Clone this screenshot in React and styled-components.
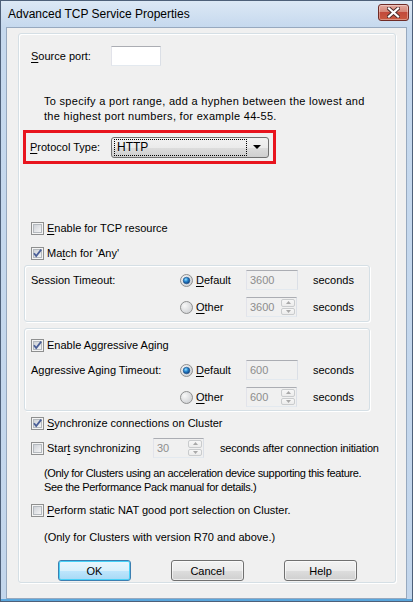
import React from 'react';
import styled, { createGlobalStyle } from 'styled-components';

const GlobalStyle = createGlobalStyle`
  html, body {
    margin: 0;
    padding: 0;
    background: #ffffff;
  }
  body {
    font-family: "Liberation Sans", Arial, sans-serif;
    font-size: 11px;
    color: #000;
  }
`;

const Window = styled.div`
  width: 413px;
  height: 602px;
  box-sizing: border-box;
  border: 1px solid #4e6079;
  background: linear-gradient(#dce8f5, #c6d9ee 26px, #c3d6ec);
  display: flex;
  flex-direction: column;
  padding: 0 5px 2px 5px;
  box-shadow: inset 0 -2px 0 #5aa6dc;
`;

const TitleBar = styled.div`
  height: 26px;
  display: flex;
  justify-content: space-between;
  align-items: center;
  padding-left: 2px;
`;

const Title = styled.span`
  font-size: 12px;
  color: #000;
  padding-bottom: 1px;
`;

const CloseButton = styled.div`
  align-self: flex-start;
  margin-top: 3px;
  margin-right: -2px;
  width: 31px;
  height: 17px;
  box-sizing: border-box;
  border: 1px solid #6f2b26;
  border-radius: 3px;
  background: linear-gradient(#e3a89f, #d58677 45%, #c24a3b 50%, #c9593f);
  box-shadow: inset 0 0 0 1px rgba(255, 255, 255, 0.35);
  display: flex;
  align-items: center;
  justify-content: center;
`;

const Client = styled.div`
  flex: 1;
  background: #f0f0f0;
  border: 1px solid #97a9bf;
  display: flex;
  flex-direction: column;
`;

const Group = styled.div`
  flex: 1;
  margin: 5px 10px 15px 11px;
  border: 1px solid #d5dfe5;
  border-radius: 3px;
  box-shadow: inset 1px 1px 0 #ffffff, 1px 1px 0 #ffffff;
  display: flex;
  flex-direction: column;
`;

const Row = styled.div`
  display: flex;
  align-items: center;
  margin-top: ${(p) => p.$mt || 0}px;
  margin-left: ${(p) => p.$ml || 0}px;
  height: ${(p) => (p.$h ? `${p.$h}px` : 'auto')};
  gap: ${(p) => p.$gap || 0}px;
`;

const Label = styled.span`
  width: ${(p) => (p.$w ? `${p.$w}px` : 'auto')};
  margin-left: ${(p) => p.$ml || 0}px;
  letter-spacing: ${(p) => p.$ls || 0}px;
  flex-shrink: 0;
  white-space: nowrap;
`;

const Key = styled.span`
  text-decoration: underline;
  text-underline-offset: 2px;
`;

const TextBox = styled.div`
  width: ${(p) => p.$w}px;
  height: 20px;
  box-sizing: border-box;
  border: 1px solid;
  border-color: #abadb3 #dbdfe6 #e3e9ef #e2e3ea;
  background: ${(p) => (p.$disabled ? '#f0f0f0' : '#ffffff')};
  color: #8d8d8d;
  display: flex;
  align-items: center;
  padding-left: 3px;
`;

const Hint = styled.div`
  margin-top: ${(p) => p.$mt}px;
  margin-left: 25px;
  line-height: ${(p) => p.$lh}px;
  white-space: nowrap;
  letter-spacing: ${(p) => p.$ls || 0}px;
`;

const Highlight = styled.div`
  margin-top: 6px;
  margin-left: 4px;
  width: 253px;
  height: 34px;
  box-sizing: border-box;
  border: 3px solid #e8141e;
  display: flex;
  align-items: center;
  padding-left: 4px;
`;

const Select = styled.div`
  width: 158px;
  height: 21px;
  box-sizing: border-box;
  border: 1px solid #707070;
  border-radius: 3px;
  background: linear-gradient(#f2f2f2, #ebebeb 50%, #dddddd 51%, #cfcfcf);
  display: flex;
  align-items: center;
  padding: 0 7px 0 2px;
  gap: 6px;
`;

const FocusText = styled.div`
  flex: 1;
  height: 15px;
  border: 1px dotted #000;
  display: flex;
  align-items: center;
  padding-left: 2px;
  font-size: 12px;
`;

const SubBox = styled.div`
  margin-top: ${(p) => p.$mt}px;
  margin-left: 5px;
  width: 346px;
  box-sizing: border-box;
  border: 1px solid #d5dfe5;
  border-radius: 3px;
  box-shadow: inset 1px 1px 0 #ffffff, 1px 1px 0 #ffffff;
  padding: ${(p) => p.$pad};
  display: flex;
  flex-direction: column;
`;

const TimeoutGrid = styled.div`
  display: grid;
  grid-template-columns: ${(p) => p.$first}px 66px 52px auto;
  grid-auto-rows: 20px;
  row-gap: 7px;
  align-items: center;
  margin-left: ${(p) => p.$ml}px;
`;

const Choice = styled.label`
  display: flex;
  align-items: center;
  gap: 3px;
  white-space: nowrap;
`;

const Seconds = styled.span`
  margin-left: 15px;
`;

const Spin = styled.div`
  width: ${(p) => p.$w}px;
  height: 20px;
  box-sizing: border-box;
  border: 1px solid;
  border-color: #abadb3 #dbdfe6 #e3e9ef #e2e3ea;
  background: #f0f0f0;
  color: #8d8d8d;
  display: flex;
  align-items: stretch;
`;

const SpinValue = styled.div`
  flex: 1;
  display: flex;
  align-items: center;
  padding-left: 3px;
`;

const SpinButtons = styled.div`
  width: 14px;
  display: flex;
  flex-direction: column;
  gap: 1px;
  padding: 1px 1px 1px 0;
`;

const SpinButton = styled.div`
  flex: 1;
  border: 1px solid #c9cbcd;
  border-radius: 2px;
  background: linear-gradient(#f7f7f7, #ececec);
  display: flex;
  align-items: center;
  justify-content: center;
`;

const Buttons = styled.div`
  margin-top: 16px;
  margin-left: 39px;
  display: flex;
  gap: 40px;
`;

const Button = styled.div`
  width: 73px;
  height: 21px;
  box-sizing: border-box;
  border: 1px solid ${(p) => (p.$default ? '#3c7fb1' : '#707070')};
  border-radius: 3px;
  background: ${(p) =>
    p.$default
      ? 'linear-gradient(#eaf6fd, #d9f0fc 50%, #bee6fd 51%, #a7d9f5)'
      : 'linear-gradient(#f2f2f2, #ebebeb 50%, #dddddd 51%, #cfcfcf)'};
  box-shadow: inset 0 0 0 1px ${(p) => (p.$default ? '#48d1f8' : 'rgba(255,255,255,0.6)')};
  display: flex;
  align-items: center;
  justify-content: center;
  font-size: 11px;
`;

function CheckBox({ checked }) {
  return (
    <svg width="13" height="13" viewBox="0 0 13 13" style={{ flexShrink: 0 }}>
      <defs>
        <linearGradient id="cbInner" x1="0" y1="0" x2="1" y2="1">
          <stop offset="0" stopColor="#cbcfd5" />
          <stop offset="1" stopColor="#f7f7f7" />
        </linearGradient>
      </defs>
      <rect x="0.5" y="0.5" width="12" height="12" fill="#f4f4f4" stroke="#8e8f8f" />
      <rect x="2.5" y="2.5" width="8" height="8" fill="url(#cbInner)" stroke="#b4b9be" />
      {checked && (
        <path d="M3 6.2 L5.2 9 L10.2 2.6" fill="none" stroke="#4a5f97" strokeWidth="1.8" />
      )}
    </svg>
  );
}

function Radio({ checked }) {
  return (
    <svg width="13" height="13" viewBox="0 0 13 13" style={{ flexShrink: 0 }}>
      <defs>
        <radialGradient id="rdOuter" cx="0.35" cy="0.35" r="0.7">
          <stop offset="0" stopColor="#f8f8f8" />
          <stop offset="1" stopColor="#cfd1d4" />
        </radialGradient>
        <radialGradient id="rdDot" cx="0.4" cy="0.35" r="0.65">
          <stop offset="0" stopColor="#9be3ff" />
          <stop offset="0.45" stopColor="#2b8ad2" />
          <stop offset="1" stopColor="#0b3f7f" />
        </radialGradient>
      </defs>
      <circle cx="6.5" cy="6.5" r="6" fill="url(#rdOuter)" stroke="#8e8f8f" />
      {checked && <circle cx="6.5" cy="6.5" r="3.3" fill="url(#rdDot)" stroke="#1c4f86" strokeWidth="0.6" />}
    </svg>
  );
}

function SpinBox({ value, width }) {
  return (
    <Spin $w={width}>
      <SpinValue>{value}</SpinValue>
      <SpinButtons>
        <SpinButton>
          <svg width="5" height="3" viewBox="0 0 5 3">
            <path d="M0 3 L2.5 0 L5 3 Z" fill="#a8a8a8" />
          </svg>
        </SpinButton>
        <SpinButton>
          <svg width="5" height="3" viewBox="0 0 5 3">
            <path d="M0 0 L2.5 3 L5 0 Z" fill="#a8a8a8" />
          </svg>
        </SpinButton>
      </SpinButtons>
    </Spin>
  );
}

function TimeoutRows({ label, value }) {
  return (
    <TimeoutGrid $first={149} $ml={6}>
      <Label>{label}</Label>
      <Choice>
        <Radio checked />
        <span>
          <Key>D</Key>efault
        </span>
      </Choice>
      <TextBox $w={52} $disabled>
        {value}
      </TextBox>
      <Seconds>seconds</Seconds>
      <span />
      <Choice>
        <Radio />
        <span>
          <Key>O</Key>ther
        </span>
      </Choice>
      <SpinBox value={value} width={51} />
      <Seconds>seconds</Seconds>
    </TimeoutGrid>
  );
}

export default function App() {
  return (
    <>
      <GlobalStyle />
      <Window>
        <TitleBar>
          <Title>Advanced TCP Service Properties</Title>
          <CloseButton>
            <svg width="13" height="11" viewBox="0 0 13 11">
              <path d="M2 1.5 L11 9.5 M11 1.5 L2 9.5" stroke="#4a2b2b" strokeWidth="4" strokeLinecap="square" />
              <path d="M2 1.5 L11 9.5 M11 1.5 L2 9.5" stroke="#ffffff" strokeWidth="2.2" strokeLinecap="square" />
            </svg>
          </CloseButton>
        </TitleBar>
        <Client>
          <Group>
            <Row $mt={12} $ml={12} $h={20}>
              <Label $w={80}>
                <Key>S</Key>ource port:
              </Label>
              <TextBox $w={50} />
            </Row>

            <Hint $mt={28} $lh={15} $ls={0.3}>
              To specify a port range, add a hyphen between the lowest and
              <br />
              the highest port numbers, for example 44-55.
            </Hint>

            <Highlight>
              <Label $w={81}>
                <Key>P</Key>rotocol Type:
              </Label>
              <Select>
                <FocusText>HTTP</FocusText>
                <svg width="8" height="4" viewBox="0 0 8 4">
                  <path d="M0 0 L8 0 L4 4 Z" fill="#000" />
                </svg>
              </Select>
            </Highlight>

            <Row $mt={57} $ml={12} $h={14} $gap={3}>
              <CheckBox />
              <Label>
                <Key>E</Key>nable for TCP resource
              </Label>
            </Row>

            <Row $mt={11} $ml={12} $h={14} $gap={3}>
              <CheckBox checked />
              <Label>
                Ma<Key>t</Key>ch for 'Any'
              </Label>
            </Row>

            <SubBox $mt={5} $pad="4px 0 4px 0">
              <TimeoutRows label="Session Timeout:" value="3600" />
            </SubBox>

            <SubBox $mt={6} $pad="9px 0 3px 0">
              <Row $ml={6} $h={14} $gap={3}>
                <CheckBox checked />
                <Label>Enable Aggressive Aging</Label>
              </Row>
              <Row $mt={8}>
                <TimeoutRows label="Aggressive Aging Timeout:" value="600" />
              </Row>
            </SubBox>

            <Row $mt={5} $ml={12} $h={14} $gap={3}>
              <CheckBox checked />
              <Label>
                <Key>S</Key>ynchronize connections on Cluster
              </Label>
            </Row>

            <Row $mt={8} $ml={12} $h={20} $gap={3}>
              <CheckBox />
              <Label $w={103}>
                Star<Key>t</Key> synchronizing
              </Label>
              <SpinBox value="30" width={51} />
              <Label $ml={13} $ls={-0.2}>seconds after connection initiation</Label>
            </Row>

            <Hint $mt={8} $lh={14} $ls={-0.35}>
              (Only for Clusters using an acceleration device supporting this feature.
              <br />
              See the Performance Pack manual for details.)
            </Hint>

            <Row $mt={9} $ml={12} $h={14} $gap={3}>
              <CheckBox />
              <Label>
                <Key>P</Key>erform static NAT good port selection on Cluster.
              </Label>
            </Row>

            <Hint $mt={13} $lh={14}>
              (Only for Clusters with version R70 and above.)
            </Hint>

            <Buttons>
              <Button $default>OK</Button>
              <Button>Cancel</Button>
              <Button>Help</Button>
            </Buttons>
          </Group>
        </Client>
      </Window>
    </>
  );
}
